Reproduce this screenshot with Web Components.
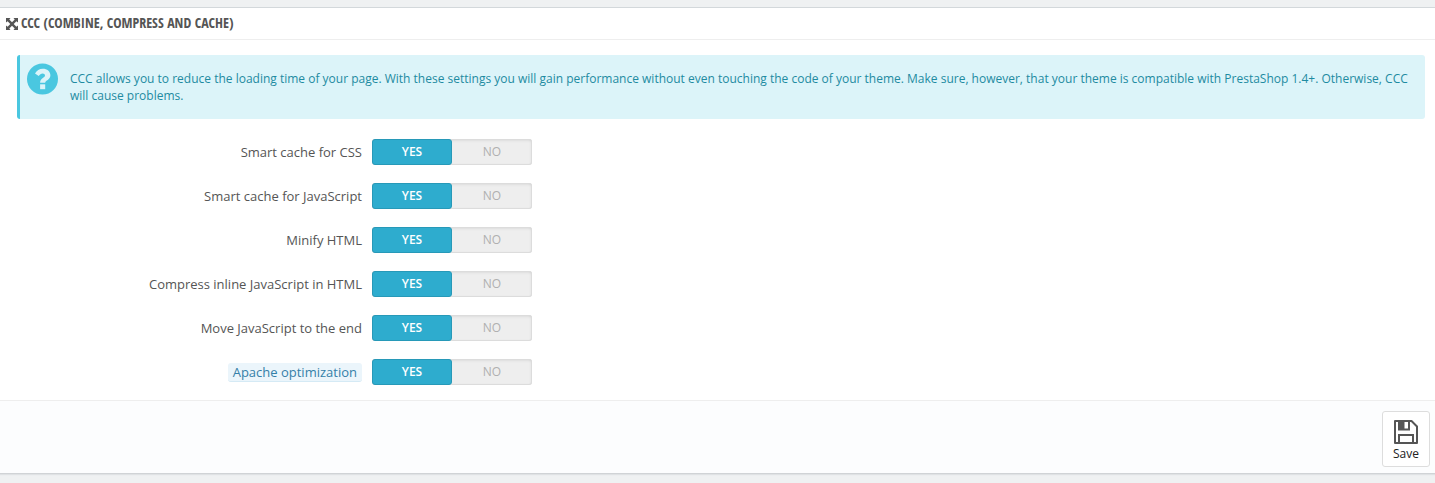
<!DOCTYPE html>
<html lang="en">
<head>
<meta charset="utf-8">
<meta name="viewport" content="width=device-width, initial-scale=1">
<title>Performance</title>
<style>
  body {
    margin: 0;
    padding: 7px 0 9px;
    background: #eff1f2;
    color: #555;
    font: 13px/18px "Open Sans", "Liberation Sans", sans-serif;
  }
</style>
</head>
<body>

<settings-panel>
  <span slot="title">CCC (Combine, Compress and Cache)</span>

  <info-alert>CCC allows you to reduce the loading time of your page. With these settings you will gain performance without even touching the code of your theme. Make sure, however, that your theme is compatible with PrestaShop 1.4+. Otherwise, CCC will cause problems.</info-alert>

  <switch-row name="css">Smart cache for CSS</switch-row>
  <switch-row name="js">Smart cache for JavaScript</switch-row>
  <switch-row name="html">Minify HTML</switch-row>
  <switch-row name="inline-js">Compress inline JavaScript in HTML</switch-row>
  <switch-row name="defer-js">Move JavaScript to the end</switch-row>
  <switch-row name="apache" hint>Apache optimization</switch-row>

  <save-button slot="footer">Save</save-button>
</settings-panel>

<script>
function createTemplate(html) {
  const template = document.createElement('template');
  template.innerHTML = html;
  return template;
}

const panelTemplate = createTemplate(`
  <style>
    :host {
      display: block;
      background: #fff;
      border-top: 1px solid #d3d8db;
      border-bottom: 1px solid #d0d3d6;
      box-shadow: 0 1px 1px #dfe2e4;
    }

    header {
      display: flex;
      align-items: center;
      gap: 3px;
      height: 31px;
      padding: 0 6px;
      border-bottom: 1px solid #eee;
    }

    h3 {
      margin: 0;
      padding-bottom: 2px;
      color: #555;
      font: 700 14px/20px "Ubuntu Condensed", "Open Sans Condensed", "Roboto Condensed", sans-serif;
      text-transform: uppercase;
    }

    form {
      margin: 0;
    }

    .body {
      display: flex;
      flex-direction: column;
      gap: 18px;
      padding: 15px 10px 15px 11px;
    }

    footer {
      display: flex;
      justify-content: flex-end;
      padding: 10px 5px 6px;
      background: #fcfdfe;
      border-top: 1px solid #eee;
    }
  </style>

  <header>
    <svg width="12" height="12" viewBox="0 0 12 12" fill="#555" aria-hidden="true">
      <path d="M0 0h4.500L3.300 1.600 6 4.300 8.700 1.600 7.500 0H12v4.500l-1.600-1.200L7.700 6l2.700 2.700L12 7.500V12H7.500l1.200-1.600L6 7.700l-2.700 2.700L4.500 12H0V7.500l1.600 1.200L4.300 6 1.600 3.300 0 4.500z"/>
    </svg>
    <h3><slot name="title"></slot></h3>
  </header>
  <form>
    <div class="body"><slot></slot></div>
    <footer><slot name="footer"></slot></footer>
  </form>`);

class SettingsPanel extends HTMLElement {
  constructor() {
    super();
    this.attachShadow({ mode: 'open' });
    this.shadowRoot.appendChild(panelTemplate.content.cloneNode(true));
  }
}

const alertTemplate = createTemplate(`
  <style>
    :host {
      display: flex;
      align-items: flex-start;
      gap: 12px;
      margin: 0 0 2px 6px;
      padding: 8px 15px 15px 7px;
      border-left: 3px solid #4ac7e0;
      border-radius: 3px;
      background: #dcf4f9;
      color: #1e8ba1;
      font-size: 12px;
      line-height: 17px;
    }

    svg {
      flex: none;
    }

    p {
      margin: 0;
      padding-top: 7px;
    }
  </style>

  <svg width="31" height="32" viewBox="0 0 31 32" aria-hidden="true">
    <circle cx="15.500" cy="16" r="15.500" fill="#4ac7e0"/>
    <path d="M8 10.400C9.800 7.300 12.300 5.700 15.900 5.700c4.100 0 7.500 2.700 7.500 6.500 0 4.800-5.200 5-5.200 7.600h-5.100c0-5.200 4.900-4.900 4.900-7.400 0-1.300-1-2-2.400-2-1.600 0-2.700 1-3.900 2.600z" fill="#dcf4f9"/>
    <path d="M13.100 21.300h5.100v4.900h-5.100z" fill="#dcf4f9"/>
  </svg>
  <p><slot></slot></p>`);

class InfoAlert extends HTMLElement {
  constructor() {
    super();
    this.attachShadow({ mode: 'open' });
    this.shadowRoot.appendChild(alertTemplate.content.cloneNode(true));
  }
}

const switchTemplate = createTemplate(`
  <style>
    :host {
      display: block;
    }

    fieldset {
      display: grid;
      grid-template-columns: minmax(0, 1fr) minmax(0, 3fr);
      align-items: center;
      gap: 10px;
      margin: 0;
      padding: 0;
      border: 0;
    }

    .title {
      justify-self: end;
      color: #555;
      text-align: right;
    }

    :host([hint]) .title {
      padding: 0 5px;
      border-bottom: 1px solid #d5eaf5;
      border-radius: 3px;
      background: #ebf5fb;
      color: #3580a8;
      cursor: help;
    }

    .switch {
      display: flex;
      width: 160px;
      height: 26px;
      border-radius: 3px;
      background: #eee;
      box-shadow: inset 0 0 0 1px #dcdcdc, inset 0 1px 3px #ccc;
    }

    label {
      flex: 1;
      box-sizing: border-box;
      border: 1px solid transparent;
      border-radius: 3px;
      color: #b0b0b0;
      font-size: 12px;
      line-height: 24px;
      text-align: center;
      text-transform: uppercase;
      cursor: pointer;
    }

    label:has(:checked) {
      border-color: #2799b8;
      background: #2eacce;
      color: #fff;
      font-weight: 600;
    }

    label:focus-within {
      outline: 2px solid #9bd9ea;
    }

    input {
      display: block;
      appearance: none;
      width: 0;
      height: 0;
      margin: 0;
      outline: 0;
    }
  </style>

  <fieldset role="radiogroup" aria-labelledby="title">
    <span class="title" id="title"><slot></slot></span>
    <div class="switch">
      <label><input type="radio" value="1" checked>Yes</label>
      <label><input type="radio" value="0">No</label>
    </div>
  </fieldset>`);

class SwitchRow extends HTMLElement {
  constructor() {
    super();
    this.attachShadow({ mode: 'open' });
    this.shadowRoot.appendChild(switchTemplate.content.cloneNode(true));
    this.inputs = this.shadowRoot.querySelectorAll('input');
  }

  connectedCallback() {
    this.inputs.forEach(input => {
      input.name = this.getAttribute('name');
    });
  }

  get value() {
    return this.shadowRoot.querySelector('input:checked').value;
  }
}

const saveTemplate = createTemplate(`
  <style>
    :host {
      display: block;
    }

    button {
      display: flex;
      flex-direction: column;
      align-items: center;
      gap: 1px;
      min-width: 48px;
      padding: 8px 9px 3px;
      border: 1px solid #ddd;
      border-radius: 3px;
      background: #fff;
      color: #222;
      font: inherit;
      font-size: 12px;
      cursor: pointer;
    }
  </style>

  <button type="button">
    <svg width="24" height="24" viewBox="0 0 24 24" fill="none" stroke="#555" stroke-width="2" aria-hidden="true">
      <path d="M1 1h16.500L23 6.500V23H1z" stroke-linejoin="round"/>
      <path d="M5 1v8.500h10V1M5 23v-8h14v8"/>
      <path d="M5 1h5.500v8H5z" fill="#555" stroke="none"/>
    </svg>
    <span><slot></slot></span>
  </button>`);

class SaveButton extends HTMLElement {
  constructor() {
    super();
    this.attachShadow({ mode: 'open' });
    this.shadowRoot.appendChild(saveTemplate.content.cloneNode(true));
  }
}

window.customElements.define('settings-panel', SettingsPanel);
window.customElements.define('info-alert', InfoAlert);
window.customElements.define('switch-row', SwitchRow);
window.customElements.define('save-button', SaveButton);
</script>
</body>
</html>
